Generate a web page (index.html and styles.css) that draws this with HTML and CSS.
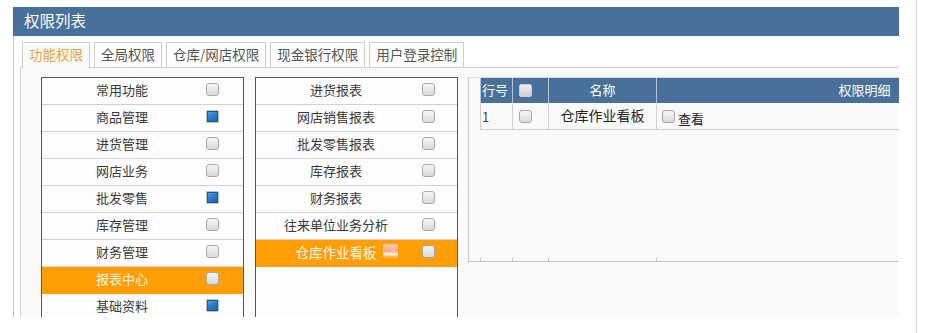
FILE: index.html
```html
<!DOCTYPE html>
<html lang="zh-CN">
<head>
<meta charset="utf-8">
<title>权限列表</title>
<link rel="stylesheet" href="styles.css">
</head>
<body>
<div class="screen">
  <div class="window">
    <div class="titlebar">权限列表</div>
    <div class="wbody">
      <div class="tabs">
        <div class="tab active">功能权限</div>
        <div class="tab">全局权限</div>
        <div class="tab">仓库/网店权限</div>
        <div class="tab">现金银行权限</div>
        <div class="tab">用户登录控制</div>
      </div>
      <div class="tabpane">
        <div class="list list-left">
          <div class="row"><span class="label">常用功能</span><span class="cell"><i class="cb"></i></span></div>
          <div class="row"><span class="label">商品管理</span><span class="cell"><i class="cb on"></i></span></div>
          <div class="row"><span class="label">进货管理</span><span class="cell"><i class="cb"></i></span></div>
          <div class="row"><span class="label">网店业务</span><span class="cell"><i class="cb"></i></span></div>
          <div class="row"><span class="label">批发零售</span><span class="cell"><i class="cb on"></i></span></div>
          <div class="row"><span class="label">库存管理</span><span class="cell"><i class="cb"></i></span></div>
          <div class="row"><span class="label">财务管理</span><span class="cell"><i class="cb"></i></span></div>
          <div class="row sel"><span class="label">报表中心</span><span class="cell"><i class="cb"></i></span></div>
          <div class="row"><span class="label">基础资料</span><span class="cell"><i class="cb on"></i></span></div>
        </div>
        <div class="list list-mid">
          <div class="row"><span class="label">进货报表</span><span class="cell"><i class="cb"></i></span></div>
          <div class="row"><span class="label">网店销售报表</span><span class="cell"><i class="cb"></i></span></div>
          <div class="row"><span class="label">批发零售报表</span><span class="cell"><i class="cb"></i></span></div>
          <div class="row"><span class="label">库存报表</span><span class="cell"><i class="cb"></i></span></div>
          <div class="row"><span class="label">财务报表</span><span class="cell"><i class="cb"></i></span></div>
          <div class="row"><span class="label">往来单位业务分析</span><span class="cell"><i class="cb"></i></span></div>
          <div class="row sel last"><span class="label big">仓库作业看板</span><span class="cell"><i class="cb"></i></span><span class="glitch"></span></div>
        </div>
        <div class="detail">
          <div class="grow head">
            <span class="gc c-no">行号</span>
            <span class="gc c-cb"><i class="cb hcb"></i></span>
            <span class="gc c-name">名称</span>
            <span class="gc c-perm">权限明细</span>
          </div>
          <div class="grow data">
            <span class="gc c-no">1</span>
            <span class="gc c-cb"><i class="cb"></i></span>
            <span class="gc c-name name-val">仓库作业看板</span>
            <span class="gc c-perm perm-val"><i class="cb"></i><span class="perm-text">查看</span></span>
          </div>
          <div class="grow ticks">
            <span class="gc"></span><span class="gc"></span><span class="gc"></span><span class="gc"></span>
          </div>
        </div>
      </div>
    </div>
  </div>
  <div class="rail"></div>
</div>
</body>
</html>
```
FILE: styles.css
```css
* { box-sizing: border-box; }
html, body { margin: 0; padding: 0; }
body {
  width: 936px;
  height: 333px;
  overflow: hidden;
  background: #ffffff;
  font-family: "Noto Sans CJK SC", "Noto Sans", sans-serif;
  color: #333;
}
.screen {
  display: flex;
  align-items: flex-start;
  height: 333px;
}
.window {
  margin-left: 13px;
  margin-top: 7px;
  width: 886px;
  height: 310px;
  display: flex;
  flex-direction: column;
  overflow: hidden;
  flex: none;
}
.titlebar {
  height: 29px;
  line-height: 27px;
  background: #47709b;
  color: #fff;
  font-size: 15.5px;
  padding-left: 11px;
  flex: none;
}
.wbody {
  flex: 1;
  min-height: 0;
  border-left: 1px solid #c2c6cc;
  padding: 6px 0 0 6px;
  display: flex;
  flex-direction: column;
  background: #fff;
}
.tabs {
  display: flex;
  gap: 4px;
  padding-left: 2px;
  flex: none;
}
.tab {
  height: 25px;
  line-height: 22px;
  padding: 0 6px;
  border: 1px solid #cdcdcd;
  border-bottom: none;
  font-size: 13.5px;
  color: #555;
  background: #fff;
}
.tab.active {
  color: #e6a23a;
  background: #fafafa;
  height: 26px;
  margin-bottom: -1px;
  position: relative;
}
.tabpane {
  flex: 1;
  min-height: 0;
  border-top: 1px solid #cfcfcf;
  border-left: 1px solid #d6d6d6;
  background: #fafafa;
  padding: 9px 0 0 20px;
  display: flex;
  align-items: flex-start;
}
.list {
  width: 203px;
  height: 260px;
  flex: none;
  border: 1px solid #555;
  background: #fdfdfd;
}
.list-mid { margin-left: 11px; }
.row {
  position: relative;
  display: flex;
  align-items: center;
  height: 27px;
  padding-bottom: 3px;
  border-bottom: 1px solid #d2d2d2;
  font-size: 13px;
  color: #3a3a3a;
}
.row.sel {
  background: #ff9f05;
  border-bottom-color: #ff9f05;
  color: #fff8ee;
}
.label {
  width: 160px;
  text-align: center;
}
.label.big { font-size: 13.5px; }
.cell {
  display: flex;
  align-items: center;
  padding-left: 4px;
}
.list-mid .cell { padding-left: 6px; }
.glitch {
  position: absolute;
  left: 127px;
  top: 4px;
  width: 15px;
  height: 15px;
  background: linear-gradient(to bottom, #ffc9bb 0%, #ffb3a4 55%, #ffffff 62%, #fff4ec 72%, #ffc47a 80%, rgba(255,159,5,0) 100%);
  opacity: 0.9;
  filter: blur(0.6px);
}
.cb {
  display: inline-block;
  width: 13px;
  height: 13px;
  border: 1px solid #a9a9a9;
  border-radius: 3px;
  background: linear-gradient(#f6f6f6, #dadada);
  flex: none;
}
.cb.on {
  border: 1px solid #b9c3ce;
  border-radius: 1px;
  background: linear-gradient(150deg, #55aeea 0%, #2a80cc 45%, #1a5ea8 100%);
  box-shadow: inset 0 0 0 1px #25568c;
}
.cb.hcb {
  border-color: #c9cfd6;
  background: linear-gradient(#ececec, #d2d2d2);
  border-radius: 2px;
}
.detail {
  flex: 1;
  margin-left: 10px;
  height: 185px;
  border-left: 1px solid #c8c8c8;
  border-top: 1px solid #dcdcdc;
  border-bottom: 1px solid #c4c4c4;
  padding-left: 11px;
  display: flex;
  flex-direction: column;
  overflow: hidden;
}
.grow {
  display: grid;
  grid-template-columns: 32px 36px 108px 416px;
  flex: none;
}
.gc {
  border-left: 1px solid #d0d0d0;
  display: flex;
  align-items: center;
  white-space: nowrap;
}
.head {
  height: 25px;
  background: #47709b;
  color: #fff;
  font-size: 13px;
}
.head .gc { border-left-color: #b6c4d3; padding-bottom: 2px; }
.head .c-cb { padding-bottom: 0; }
.data {
  height: 27px;
  border-bottom: 1px solid #cfcfcf;
  font-size: 13px;
  color: #444;
}
.c-no { padding-left: 1px; }
.c-cb { padding-left: 6px; }
.c-name, .c-perm { justify-content: center; }
.name-val { font-size: 14px; color: #222; padding-bottom: 2px; }
.perm-val { justify-content: flex-start; padding-left: 5px; }
.perm-text { margin-left: 3px; margin-top: 4px; color: #222; }
.ticks {
  margin-top: auto;
  height: 3px;
}
.ticks .gc { border-left-color: #c4c4c4; }
.rail {
  flex: none;
  margin-left: 17px;
  width: 20px;
  height: 333px;
  border-left: 1px solid #dcdcdc;
}
```
